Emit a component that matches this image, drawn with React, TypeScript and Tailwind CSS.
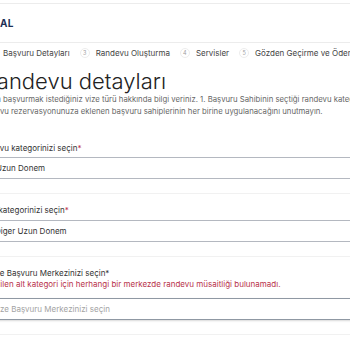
export default function App() {
  const steps = [
    { n: "2", t: "Başvuru Detayları" },
    { n: "3", t: "Randevu Oluşturma" },
    { n: "4", t: "Servisler" },
    { n: "5", t: "Gözden Geçirme ve Ödeme" },
  ];
  return (
    <div className="w-[350px] h-[350px] overflow-hidden bg-white text-[#333] font-[family-name:Inter,sans-serif]">
      <div className="h-[3px]" />
      <div className="border-t border-b border-[#ececec] h-[40px] flex items-center">
        <span className="text-[10px] font-bold text-[#1d2f55] tracking-[0.2px]">AL</span>
      </div>
      <div className="h-[20px] flex items-center gap-[10px] -ml-[13px] whitespace-nowrap">
        {steps.map((s) => (
          <div key={s.n} className="flex items-center gap-[6px]">
            <span className="w-[10px] h-[10px] rounded-full border border-[#ededed] text-[5.5px] text-[#a0a0a0] flex items-center justify-center">
              {s.n}
            </span>
            <span className="text-[8px] text-[#444]">{s.t}</span>
          </div>
        ))}
      </div>
      <h1 className="mt-[5px] -ml-[17px] text-[22px] leading-[26px] font-light text-[#222] whitespace-nowrap">
        Randevu detayları
      </h1>
      <div className="-mt-[1px] text-[7.75px] leading-[12px] text-[#666] whitespace-nowrap">
        <div className="-ml-[63px]">
          Lütfen randevuya başvurmak istediğiniz vize türü hakkında bilgi veriniz. 1. Başvuru Sahibinin seçtiği randevu kategorisinin
        </div>
        <div className="-ml-[21px]">
          randevu rezervasyonunuza eklenen başvuru sahiplerinin her birine uygulanacağını unutmayın.
        </div>
      </div>

      <div className="mt-[26px] pb-[14px] border-b border-[#f1f1f1]">
        <div className="-ml-[24px] text-[8px] leading-[11px] whitespace-nowrap">
          Randevu kategorinizi seçin<span className="text-[#c0304a]">*</span>
        </div>
        <div className="mt-[3px] -ml-[20px] w-[420px] h-[22px] border border-[#b4b8c0] rounded-[3px] flex items-center pl-[15px] text-[8px] whitespace-nowrap">
          Uzun Donem
        </div>
      </div>

      <div className="mt-[11px] pb-[14px] border-b border-[#f1f1f1]">
        <div className="-ml-[14px] text-[8px] leading-[11px] whitespace-nowrap">
          Alt kategorinizi seçin<span className="text-[#c0304a]">*</span>
        </div>
        <div className="mt-[4px] -ml-[20px] w-[420px] h-[22px] border border-[#b4b8c0] rounded-[3px] flex items-center pl-[14px] text-[8px] whitespace-nowrap">
          Diger Uzun Donem
        </div>
      </div>

      <div className="mt-[11px] pb-[14px] border-b border-[#f1f1f1]">
        <div className="-ml-[12px] text-[8px] leading-[11px] whitespace-nowrap">Vize Başvuru Merkezinizi seçin*</div>
        <div className="-ml-[14px] text-[8px] leading-[11px] text-[#b8324a] whitespace-nowrap">
          Seçilen alt kategori için herhangi bir merkezde randevu müsaitliği bulunamadı.
        </div>
        <div className="mt-[8px] -ml-[20px] w-[420px] h-[22px] border border-[#8f98a3] rounded-[3px] shadow-[0_1px_2px_rgba(0,0,0,0.15)] flex items-center pl-[11.5px] text-[8px] text-[#a3a3a3] whitespace-nowrap">
          Vize Başvuru Merkezinizi seçin
        </div>
      </div>
    </div>
  );
}
